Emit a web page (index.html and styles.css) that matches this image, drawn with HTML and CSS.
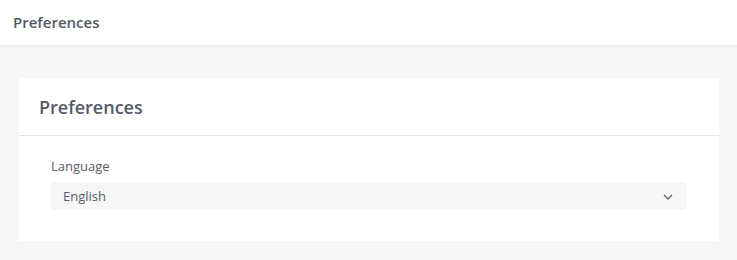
FILE: index.html
```html
<!DOCTYPE html>
<html lang="en">
<head>
    <meta charset="UTF-8">
    <meta name="viewport" content="width=device-width, initial-scale=1.0">
    <title>Preferences</title>
    <link rel="stylesheet" href="styles.css">
</head>
<body>
    <div class="topbar">
        <span class="topbar-title">Preferences</span>
    </div>

    <div class="content">
        <div class="card">
            <div class="card-header">
                <h2>Preferences</h2>
            </div>
            <div class="card-body">
                <label class="field-label" for="lang">Language</label>
                <div class="select-wrap">
                    <select id="lang" class="select">
                        <option>English</option>
                    </select>
                    <svg class="chevron" width="10" height="6" viewBox="0 0 10 6">
                        <path d="M1 1 L5 5 L9 1" fill="none" stroke="#5f6370" stroke-width="1.3"/>
                    </svg>
                </div>
            </div>
        </div>
    </div>
</body>
</html>
```

FILE: styles.css
```css
* {
    box-sizing: border-box;
}
body {
    margin: 0;
    font-family: "Open Sans", Arial, sans-serif;
    background-color: #f6f6f6;
    color: #595c6b;
    height: 260px;
}
.topbar {
    height: 45px;
    background-color: #fff;
    display: flex;
    align-items: center;
    padding-left: 13px;
    padding-bottom: 1px;
    box-shadow: 0 1px 4px rgba(0, 0, 0, 0.08);
    position: relative;
}
.topbar-title {
    font-size: 15px;
    font-weight: 600;
    color: #535868;
}
.content {
    padding: 33px 18px 0 19px;
}
.card {
    background-color: #fff;
    width: 700px;
}
.card-header {
    height: 58px;
    display: flex;
    align-items: center;
    padding-left: 20px;
    border-bottom: 1px solid #e6e6e6;
}
.card-header h2 {
    margin: 0;
    font-size: 18px;
    font-weight: 600;
    color: #555968;
}
.card-body {
    padding: 21px 32px 31px 32px;
}
.field-label {
    display: block;
    font-size: 13px;
    color: #595c6b;
    margin-bottom: 7px;
}
.select-wrap {
    position: relative;
}
.select {
    appearance: none;
    -webkit-appearance: none;
    width: 100%;
    height: 28px;
    border: none;
    border-radius: 4px;
    background-color: #f6f6f6;
    font-family: "Open Sans", Arial, sans-serif;
    font-size: 13px;
    color: #595c6b;
    padding: 0 12px;
    outline: none;
}
.chevron {
    position: absolute;
    right: 14px;
    top: 12px;
    pointer-events: none;
}
```
